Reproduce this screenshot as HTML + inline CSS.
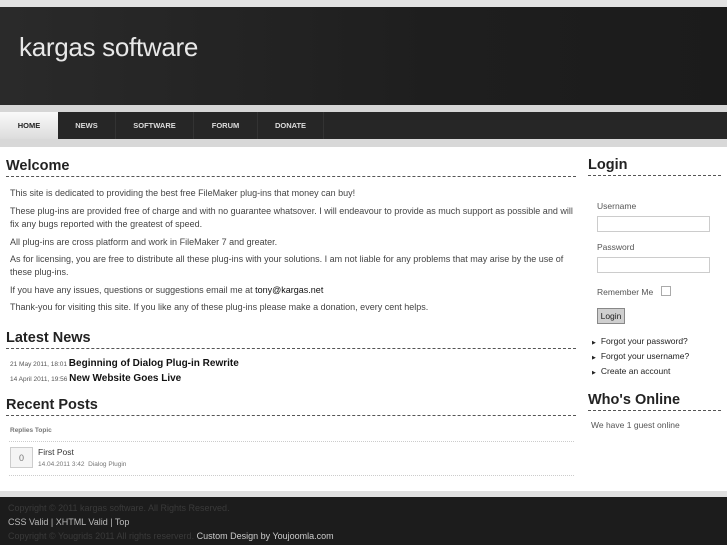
<!DOCTYPE html>
<html><head><meta charset="utf-8"><style>
*{margin:0;padding:0;box-sizing:border-box}
body{width:727px;height:545px;overflow:hidden;background:#fff;font-family:"Liberation Sans",sans-serif;position:relative}
.top{position:absolute;left:0;top:0;width:727px;height:7px;background:#e2e2e2}
.hdr{position:absolute;left:0;top:7px;width:727px;height:98px;background:linear-gradient(90deg,#2a2a2a,#1e1e1e 60%,#1b1b1b)}
.hdr h1{position:absolute;left:19px;top:25px;font-weight:normal;font-size:26px;color:#e8e8e8;font-family:"Liberation Sans",sans-serif;letter-spacing:-0.3px}
.strip1{position:absolute;left:0;top:105px;width:727px;height:7px;background:#d6d6d6}
.nav{position:absolute;left:0;top:112px;width:727px;height:27px;background:#262626}
.nav span{position:absolute;top:0;height:27px;line-height:27px;font-size:7.5px;font-weight:bold;color:#ddd;text-align:center;border-right:1px solid #333}
.nav .home{background:linear-gradient(#fafafa,#dcdcdc);color:#222;border:none}
.strip2{position:absolute;left:0;top:139px;width:727px;height:8px;background:#d8d8d8}
h2{position:absolute;font-size:14.5px;font-weight:bold;color:#222;border-bottom:1px dashed #555;padding-bottom:2px}
.p{position:absolute;left:10px;font-size:9px;color:#444;width:566px;line-height:13px}
.news{position:absolute;left:10px;font-size:6.5px;color:#555}
.news b{font-size:10px;color:#111}
.foot{position:absolute;left:0;top:491px;width:727px;height:6px;background:#e0e0e0}
.fd{position:absolute;left:0;top:497px;width:727px;height:48px;background:#1c1c1c;font-size:9px}
.fd div{position:absolute;left:8px}
.sb{position:absolute;font-size:8.5px;color:#555}
input.t{position:absolute;left:597px;width:113px;height:16px;border:1px solid #ccc;background:#fff}
</style></head><body>
<div class="top"></div>
<div class="hdr"><h1>kargas software</h1></div>
<div class="strip1"></div>
<div class="nav">
<span class="home" style="left:0;width:58px">HOME</span>
<span style="left:58px;width:58px">NEWS</span>
<span style="left:116px;width:78px">SOFTWARE</span>
<span style="left:194px;width:64px">FORUM</span>
<span style="left:258px;width:66px">DONATE</span>
</div>
<div class="strip2"></div>

<h2 style="left:6px;top:158px;width:570px">Welcome</h2>
<div class="p" style="top:187px">This site is dedicated to providing the best free FileMaker plug-ins that money can buy!</div>
<div class="p" style="top:205px">These plug-ins are provided free of charge and with no guarantee whatsover. I will endeavour to provide as much support as possible and will fix any bugs reported with the greatest of speed.</div>
<div class="p" style="top:236px">All plug-ins are cross platform and work in FileMaker 7 and greater.</div>
<div class="p" style="top:253px">As for licensing, you are free to distribute all these plug-ins with your solutions. I am not liable for any problems that may arise by the use of these plug-ins.</div>
<div class="p" style="top:284px">If you have any issues, questions or suggestions email me at <span style="color:#111">tony@kargas.net</span></div>
<div class="p" style="top:301px">Thank-you for visiting this site. If you like any of these plug-ins please make a donation, every cent helps.</div>

<h2 style="left:6px;top:330px;width:570px">Latest News</h2>
<div class="news" style="top:358px">21 May 2011, 18:01 <b>Beginning of Dialog Plug-in Rewrite</b></div>
<div class="news" style="top:373px">14 April 2011, 19:56 <b>New Website Goes Live</b></div>

<h2 style="left:6px;top:397px;width:570px">Recent Posts</h2>
<div style="position:absolute;left:10px;top:427px;font-size:6.5px;font-weight:bold;color:#777">Replies Topic</div>
<div style="position:absolute;left:9px;top:441px;width:565px;border-top:1px dotted #ccc"></div>
<div style="position:absolute;left:10px;top:447px;width:23px;height:21px;border:1px solid #ccc;background:#f4f4f4;font-size:9px;color:#777;text-align:center;line-height:20px">0</div>
<div style="position:absolute;left:38px;top:447px;font-size:8.5px;color:#333">First Post</div>
<div style="position:absolute;left:38px;top:461px;font-size:6.5px;color:#777">14.04.2011 3:42 &nbsp;Dialog Plugin</div>
<div style="position:absolute;left:9px;top:475px;width:565px;border-top:1px dotted #ccc"></div>

<h2 style="left:588px;top:157px;width:133px">Login</h2>
<div class="sb" style="left:597px;top:201px">Username</div>
<input class="t" style="top:216px">
<div class="sb" style="left:597px;top:242px">Password</div>
<input class="t" style="top:257px">
<div class="sb" style="left:597px;top:287px">Remember Me</div>
<div style="position:absolute;left:661px;top:286px;width:10px;height:10px;border:1px solid #aaa;background:#fff"></div>
<div style="position:absolute;left:597px;top:308px;width:28px;height:16px;border:1px solid #888;background:#cfcfcf;font-size:8.5px;color:#222;text-align:center;line-height:14px">Login</div>
<div class="sb" style="left:592px;top:335px;color:#222;line-height:13px">
<div><span style="font-size:5px;margin-right:5px">▶</span>Forgot your password?</div>
<div><span style="font-size:5px;margin-right:5px">▶</span>Forgot your username?</div>
<div><span style="font-size:5px;margin-right:5px">▶</span>Create an account</div>
</div>
<h2 style="left:588px;top:392px;width:133px">Who's Online</h2>
<div class="sb" style="left:591px;top:420px">We have 1 guest online</div>

<div class="foot"></div>
<div class="fd">
<div style="top:6px;color:#3a3a3a">Copyright © 2011 kargas software. All Rights Reserved.</div>
<div style="top:20px;color:#bbb">CSS Valid | XHTML Valid | Top</div>
<div style="top:34px;color:#3a3a3a">Copyright © Yougrids 2011 All rights reserverd. <span style="color:#ccc">Custom Design by Youjoomla.com</span></div>
</div>
</body></html>
